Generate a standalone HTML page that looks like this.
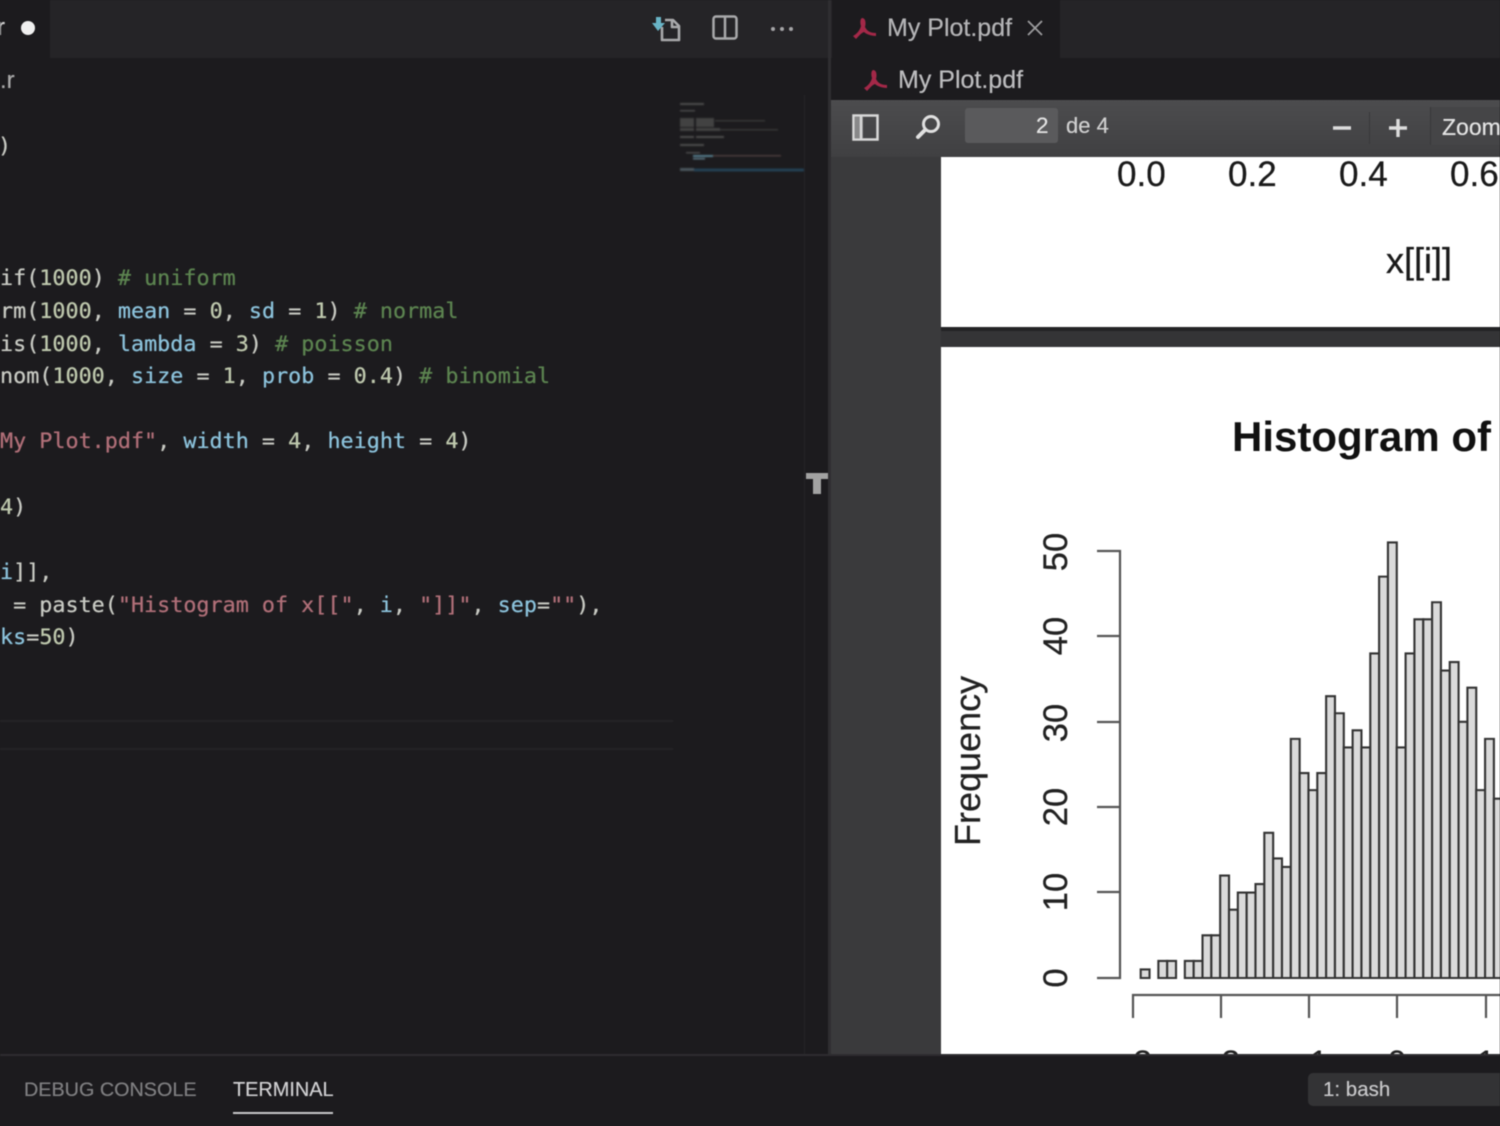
<!DOCTYPE html>
<html>
<head>
<meta charset="utf-8">
<style>
html,body{margin:0;padding:0;background:#1c1b1e;}
#r{position:relative;width:1500px;height:1126px;overflow:hidden;background:#1c1b1e;filter:blur(0.65px);font-family:"Liberation Sans",sans-serif;}
.a{position:absolute;}
.c{position:absolute;left:0;font-family:"DejaVu Sans Mono","Liberation Mono",monospace;font-size:21.75px;line-height:32px;height:32px;white-space:pre;color:#c9cbc4;text-shadow:0 0 .7px currentColor;}
.p{color:#8cc3dc;}
.s{color:#b06f78;}
.g{color:#5c8450;}
.n{color:#bfc9ae;}
.t{position:absolute;white-space:pre;color:#b4b4b6;text-shadow:0 0 .5px currentColor;}
svg{position:absolute;left:0;top:0;}
</style>
</head>
<body>
<div id="r">
  <!-- tab bars -->
  <div class="a" style="left:0;top:0;width:830px;height:58px;background:#252427"></div>
  <div class="a" style="left:0;top:0;width:50px;height:58px;background:#1c1b1e"></div>
  <div class="a" style="left:830px;top:0;width:670px;height:58px;background:#252427"></div>
  <div class="a" style="left:832px;top:0;width:228px;height:58px;background:#1c1b1e"></div>
  <div class="a" style="left:828px;top:0;width:3px;height:1055px;background:#2f2e31"></div>
  <div class="a" style="left:804px;top:95px;width:1px;height:960px;background:#242326"></div>

  <!-- left tab & breadcrumb -->
  <div class="t" style="left:-3px;top:14px;font-size:24px;line-height:28px;color:#d0d0d0">r</div>
  <div class="a" style="left:21px;top:21px;width:14px;height:14px;border-radius:50%;background:#f0f0f0"></div>
  <div class="t" style="left:0;top:67px;font-size:24px;line-height:28px;color:#a8a8a8">.r</div>

  <!-- code -->
  <div class="c" style="top:131px;left:-2px">)</div>
  <div class="c" style="top:263px">if(<span class="n">1000</span>) <span class="g"># uniform</span></div>
  <div class="c" style="top:296px">rm(<span class="n">1000</span>, <span class="p">mean</span> = <span class="n">0</span>, <span class="p">sd</span> = <span class="n">1</span>) <span class="g"># normal</span></div>
  <div class="c" style="top:328.500px">is(<span class="n">1000</span>, <span class="p">lambda</span> = <span class="n">3</span>) <span class="g"># poisson</span></div>
  <div class="c" style="top:361px">nom(<span class="n">1000</span>, <span class="p">size</span> = <span class="n">1</span>, <span class="p">prob</span> = <span class="n">0.4</span>) <span class="g"># binomial</span></div>
  <div class="c" style="top:426px"><span class="s">My Plot.pdf"</span>, <span class="p">width</span> = <span class="n">4</span>, <span class="p">height</span> = <span class="n">4</span>)</div>
  <div class="c" style="top:491.500px"><span class="n">4</span>)</div>
  <div class="c" style="top:557px"><span class="p">i</span>]],</div>
  <div class="c" style="top:589.500px"> = paste(<span class="s">"Histogram of x[["</span>, <span class="p">i</span>, <span class="s">"]]"</span>, <span class="p">sep</span>=<span class="s">""</span>),</div>
  <div class="c" style="top:622px"><span class="p">ks</span>=<span class="n">50</span>)</div>

  <!-- current-line borders -->
  <div class="a" style="left:0;top:720px;width:673px;height:2px;background:#242326"></div>
  <div class="a" style="left:0;top:748px;width:673px;height:2px;background:#242326"></div>

  <!-- minimap -->
  <svg width="1500" height="1126" viewBox="0 0 1500 1126">
    <g fill="#4c4c4c" style="filter:blur(.8px)">
      <rect x="680" y="103" width="24" height="2"/>
      <rect x="680" y="110" width="15" height="1.500"/>
      <rect x="680" y="118" width="14" height="9" fill="#424242"/>
      <rect x="696" y="118" width="18" height="9" fill="#424242"/>
      <rect x="715" y="120" width="50" height="1.500" fill="#383838"/>
      <rect x="680" y="128" width="14" height="3" fill="#424242"/>
      <rect x="696" y="128" width="24" height="3" fill="#424242"/>
      <rect x="720" y="129" width="58" height="1.500" fill="#383838"/>
      <rect x="680" y="136" width="14" height="2"/>
      <rect x="696" y="136" width="28" height="2"/>
      <rect x="680" y="144" width="24" height="2"/>
      <rect x="686" y="152" width="14" height="1.500"/>
      <rect x="693" y="155" width="20" height="2" fill="#557c8c"/>
      <rect x="713" y="155" width="68" height="1.500" fill="#4c3c3c"/>
      <rect x="693" y="158" width="12" height="1.500" fill="#5c7684"/>
      <rect x="680" y="168" width="14" height="3" fill="#4a555c"/>
      <rect x="694" y="168.500" width="110" height="3" fill="#233f52"/>
    </g>
    <!-- save icon -->
    <g fill="none" stroke="#a9a9ab" stroke-width="2.600" stroke-linejoin="round">
      <path d="M662 27V40H679V26L673 20H665"/>
      <path d="M672 21V27H679"/>
    </g>
    <path d="M656 17H661V23H665L658 31L652 23H656Z" fill="#71c4d8" opacity=".9"/>
    <!-- split editor icon -->
    <rect x="713.500" y="16.500" width="23" height="22" rx="2.500" fill="none" stroke="#a9a9ab" stroke-width="2.500"/>
    <path d="M725 17V38" stroke="#a9a9ab" stroke-width="2.500"/>
    <!-- more dots -->
    <g fill="#a5a5a7"><circle cx="773" cy="29" r="2"/><circle cx="782" cy="29" r="2"/><circle cx="791" cy="29" r="2"/></g>
  </svg>

  <!-- right tabs -->
  <svg width="1500" height="1126" viewBox="0 0 1500 1126">
    <path d="M862 18C866 18 866 24 865 27C867 31 870 33 876 33V36C871 36 866 34 864 32C861 33 859 36 856 39L853 36C857 34 860 30 861 26C860 23 860 19 862 18Z" fill="#a32848"/>
    <path d="M1028 21L1042 35M1042 21L1028 35" stroke="#9c9c9e" stroke-width="1.800" fill="none"/>
  </svg>
  <div class="t" style="left:887px;top:13px;font-size:25px;line-height:30px">My Plot.pdf</div>
  <div class="a" style="left:831px;top:58px;width:669px;height:42px;background:#1c1b1e"></div>
  <svg width="1500" height="1126" viewBox="0 0 1500 1126">
    <path d="M862 18C866 18 866 24 865 27C867 31 870 33 876 33V36C871 36 866 34 864 32C861 33 859 36 856 39L853 36C857 34 860 30 861 26C860 23 860 19 862 18Z" transform="translate(11 52)" fill="#a32848"/>
  </svg>
  <div class="t" style="left:898px;top:65px;font-size:25px;line-height:30px;color:#bcbcbe">My Plot.pdf</div>

  <!-- pdf toolbar -->
  <div class="a" style="left:831px;top:100px;width:669px;height:57px;background:linear-gradient(#4c4c4e,#404042)"></div>
  <div class="a" style="left:965px;top:108px;width:93px;height:35px;background:#5a5a5c;border-radius:3px"></div>
  <div class="t" style="left:1036px;top:112px;font-size:22.500px;line-height:28px;color:#e4e4e4">2</div>
  <div class="t" style="left:1066px;top:112px;font-size:22px;line-height:28px;color:#d0d0d0">de 4</div>
  <div class="a" style="left:1369px;top:112px;width:1px;height:32px;background:#38383a"></div>
  <div class="a" style="left:1430px;top:107px;width:70px;height:38px;background:#454547;border-left:1px solid #38383a"></div>
  <div class="t" style="left:1442px;top:113px;font-size:23px;line-height:28px;color:#e4e4e4">Zoom</div>
  <svg width="1500" height="1126" viewBox="0 0 1500 1126">
    <rect x="853.500" y="115.500" width="24" height="24" fill="none" stroke="#d8d8d8" stroke-width="2.500"/>
    <rect x="855" y="117" width="8" height="21" fill="#c0c0c0" opacity=".55"/>
    <path d="M861 116V139" stroke="#d8d8d8" stroke-width="2.500"/>
    <circle cx="931" cy="124" r="7.500" fill="none" stroke="#e0e0e0" stroke-width="3"/>
    <path d="M925 130L918 137" stroke="#e0e0e0" stroke-width="4" stroke-linecap="round"/>
    <path d="M1333 128H1351" stroke="#dcdcdc" stroke-width="3.400"/>
    <path d="M1389 128H1407M1398 119V137" stroke="#dcdcdc" stroke-width="3.400"/>
  </svg>

  <!-- viewer -->
  <div class="a" style="left:831px;top:157px;width:669px;height:898px;background:#3a3a3c"></div>
  <div class="a" style="left:941px;top:157px;width:559px;height:170px;background:#fff"></div>
  <div class="a" style="left:941px;top:327px;width:559px;height:4px;background:#232325"></div>
  <div class="a" style="left:941px;top:331px;width:559px;height:16px;background:#343436"></div>
  <div class="a" style="left:941px;top:347px;width:559px;height:708px;background:#fff"></div>

  <svg width="1500" height="1126" viewBox="0 0 1500 1126" style="font-family:'Liberation Sans',sans-serif">
    <g fill="#1a1a1a" font-size="35" stroke="#1a1a1a" stroke-width=".3">
      <text x="1117" y="186">0.0</text>
      <text x="1228" y="186">0.2</text>
      <text x="1339" y="186">0.4</text>
      <text x="1450" y="186">0.6</text>
      <text x="1386" y="273" font-size="36">x[[i]]</text>
    </g>
    <text x="1232" y="451" font-size="42" font-weight="bold" fill="#111">Histogram of</text>
    <text transform="translate(980,846) rotate(-90)" font-size="36" fill="#222" stroke="#222" stroke-width=".25">Frequency</text>
    <g fill="#222" font-size="34.500" text-anchor="middle" stroke="#222" stroke-width=".3">
      <text transform="translate(1067,978) rotate(-90)">0</text>
      <text transform="translate(1067,892) rotate(-90)">10</text>
      <text transform="translate(1067,807) rotate(-90)">20</text>
      <text transform="translate(1067,723) rotate(-90)">30</text>
      <text transform="translate(1067,636) rotate(-90)">40</text>
      <text transform="translate(1067,552) rotate(-90)">50</text>
    </g>
    <path d="M1097 551H1120V978H1097M1097 636H1120M1097 722H1120M1097 807H1120M1097 892H1120" fill="none" stroke="#555" stroke-width="2.200"/>
    <path d="M1133 1018V995H1500M1221 995V1018M1309 995V1018M1397 995V1018M1486 995V1018" fill="none" stroke="#555" stroke-width="2.200"/>
    <g transform="translate(1140.700,978) scale(8.830,-8.540)" fill="#dadada" stroke="#333" stroke-width="2.100">
      <rect vector-effect="non-scaling-stroke" x="0" y="0" width="1" height="1"/>
      <rect vector-effect="non-scaling-stroke" x="1" y="0" width="1" height="0"/>
      <rect vector-effect="non-scaling-stroke" x="2" y="0" width="1" height="2"/>
      <rect vector-effect="non-scaling-stroke" x="3" y="0" width="1" height="2"/>
      <rect vector-effect="non-scaling-stroke" x="4" y="0" width="1" height="0"/>
      <rect vector-effect="non-scaling-stroke" x="5" y="0" width="1" height="2"/>
      <rect vector-effect="non-scaling-stroke" x="6" y="0" width="1" height="2"/>
      <rect vector-effect="non-scaling-stroke" x="7" y="0" width="1" height="5"/>
      <rect vector-effect="non-scaling-stroke" x="8" y="0" width="1" height="5"/>
      <rect vector-effect="non-scaling-stroke" x="9" y="0" width="1" height="12"/>
      <rect vector-effect="non-scaling-stroke" x="10" y="0" width="1" height="8"/>
      <rect vector-effect="non-scaling-stroke" x="11" y="0" width="1" height="10"/>
      <rect vector-effect="non-scaling-stroke" x="12" y="0" width="1" height="10"/>
      <rect vector-effect="non-scaling-stroke" x="13" y="0" width="1" height="11"/>
      <rect vector-effect="non-scaling-stroke" x="14" y="0" width="1" height="17"/>
      <rect vector-effect="non-scaling-stroke" x="15" y="0" width="1" height="14"/>
      <rect vector-effect="non-scaling-stroke" x="16" y="0" width="1" height="13"/>
      <rect vector-effect="non-scaling-stroke" x="17" y="0" width="1" height="28"/>
      <rect vector-effect="non-scaling-stroke" x="18" y="0" width="1" height="24"/>
      <rect vector-effect="non-scaling-stroke" x="19" y="0" width="1" height="22"/>
      <rect vector-effect="non-scaling-stroke" x="20" y="0" width="1" height="24"/>
      <rect vector-effect="non-scaling-stroke" x="21" y="0" width="1" height="33"/>
      <rect vector-effect="non-scaling-stroke" x="22" y="0" width="1" height="31"/>
      <rect vector-effect="non-scaling-stroke" x="23" y="0" width="1" height="27"/>
      <rect vector-effect="non-scaling-stroke" x="24" y="0" width="1" height="29"/>
      <rect vector-effect="non-scaling-stroke" x="25" y="0" width="1" height="27"/>
      <rect vector-effect="non-scaling-stroke" x="26" y="0" width="1" height="38"/>
      <rect vector-effect="non-scaling-stroke" x="27" y="0" width="1" height="47"/>
      <rect vector-effect="non-scaling-stroke" x="28" y="0" width="1" height="51"/>
      <rect vector-effect="non-scaling-stroke" x="29" y="0" width="1" height="27"/>
      <rect vector-effect="non-scaling-stroke" x="30" y="0" width="1" height="38"/>
      <rect vector-effect="non-scaling-stroke" x="31" y="0" width="1" height="42"/>
      <rect vector-effect="non-scaling-stroke" x="32" y="0" width="1" height="42"/>
      <rect vector-effect="non-scaling-stroke" x="33" y="0" width="1" height="44"/>
      <rect vector-effect="non-scaling-stroke" x="34" y="0" width="1" height="36"/>
      <rect vector-effect="non-scaling-stroke" x="35" y="0" width="1" height="37"/>
      <rect vector-effect="non-scaling-stroke" x="36" y="0" width="1" height="30"/>
      <rect vector-effect="non-scaling-stroke" x="37" y="0" width="1" height="34"/>
      <rect vector-effect="non-scaling-stroke" x="38" y="0" width="1" height="22"/>
      <rect vector-effect="non-scaling-stroke" x="39" y="0" width="1" height="28"/>
      <rect vector-effect="non-scaling-stroke" x="40" y="0" width="1" height="21"/>
    </g>
    <g fill="#222" font-size="34" text-anchor="middle">
      <text x="1137" y="1074">-3</text>
      <text x="1225" y="1074">-2</text>
      <text x="1313" y="1074">-1</text>
      <text x="1397" y="1074">0</text>
      <text x="1486" y="1074">1</text>
    </g>
    <!-- I-beam cursor -->
    <path d="M806 473H828V479H821V494H813V479H806Z" fill="#a2a2a2"/>
  </svg>

  <!-- bottom panel -->
  <div class="a" style="left:0;top:1054px;width:1500px;height:72px;background:#1c1b1e;border-top:2px solid #2d2c2f;box-sizing:border-box"></div>
  <div class="t" style="left:24px;top:1077px;font-size:19.800px;line-height:26px;color:#7f7f81">DEBUG CONSOLE</div>
  <div class="t" style="left:233px;top:1077px;font-size:19.900px;line-height:26px;color:#d0d0d2">TERMINAL</div>
  <div class="a" style="left:233px;top:1112px;width:100px;height:2px;background:#c8c8ca"></div>
  <div class="a" style="left:1308px;top:1073px;width:192px;height:33px;background:#333335;border-radius:5px 0 0 5px"></div>
  <div class="t" style="left:1323px;top:1077px;font-size:20.500px;line-height:26px;color:#c8c8ca">1: bash</div>
</div>
</body>
</html>
